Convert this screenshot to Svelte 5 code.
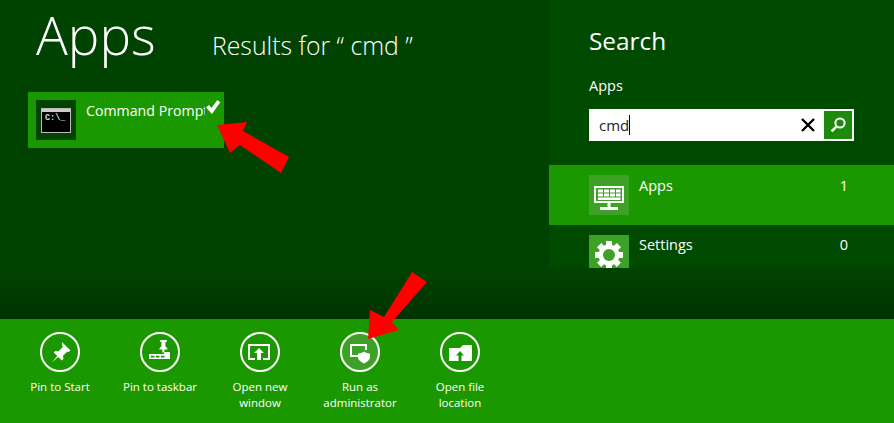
<script>
	const commands = [
		{ id: 'pin', label: ['Pin to Start'] },
		{ id: 'taskbar', label: ['Pin to taskbar'] },
		{ id: 'window', label: ['Open new', 'window'] },
		{ id: 'admin', label: ['Run as', 'administrator'] },
		{ id: 'folder', label: ['Open file', 'location'] }
	];
</script>

<div class="screen">
	<div class="main">
		<section class="results">
			<header class="heading">
				<h1>Apps</h1>
				<h2>Results for “ cmd ”</h2>
			</header>
			<div class="tile">
				<div class="tile-icon">
					<div class="console">
						<span class="console-bar"></span>
						<span class="console-text">C:\_</span>
					</div>
				</div>
				<span class="tile-name">Command Prompt</span>
				<svg class="check" viewBox="0 0 16 16" width="16" height="16">
					<path d="M1 8.500l3-2.600 2.500 3L12.300 1l3 2.200L7 15z" fill="#fff" />
				</svg>
			</div>
		</section>

		<aside class="charm">
			<h3>Search</h3>
			<div class="scope">Apps</div>
			<div class="box">
				<span class="query">cmd</span>
				<span class="caret"></span>
				<svg class="clear" viewBox="0 0 16 16" width="16" height="16">
					<path d="M2 2l12 12M14 2L2 14" stroke="#000" stroke-width="2.400" fill="none" />
				</svg>
				<div class="go">
					<svg viewBox="0 0 20 20" width="20" height="20">
						<circle cx="12" cy="8" r="4.600" stroke="#fff" stroke-width="2" fill="none" />
						<path d="M8.600 11.400L3.600 16.400" stroke="#fff" stroke-width="2.600" />
					</svg>
				</div>
			</div>
			<div class="row selected">
				<div class="row-icon">
					<svg viewBox="0 0 40 40" width="40" height="40">
						<path fill-rule="evenodd" fill="#fff" d="M5 11h30v17h-30zM7 13v13h26v-13z" />
						<path fill="#fff" d="M9 14.500h5v3h-5zM15 14.500h5v3h-5zM21 14.500h5v3h-5zM27 14.500h4.500v3h-4.500zM9 18.500h5v3h-5zM15 18.500h5v3h-5zM21 18.500h5v3h-5zM27 18.500h4.500v3h-4.500zM9 22.500h22.500v2.500h-22.500zM18.500 28h3v4h-3zM11 32h18v3h-18z" />
					</svg>
				</div>
				<span class="row-name">Apps</span>
				<span class="row-count">1</span>
			</div>
			<div class="row cut">
				<div class="row-icon">
					<svg viewBox="0 0 40 40" width="40" height="40">
						<g fill="#fff">
							<rect x="17" y="6" width="6" height="28" />
							<rect x="17" y="6" width="6" height="28" transform="rotate(45 20 20)" />
							<rect x="17" y="6" width="6" height="28" transform="rotate(90 20 20)" />
							<rect x="17" y="6" width="6" height="28" transform="rotate(135 20 20)" />
						</g>
						<circle cx="20" cy="20" r="10.500" fill="#fff" />
						<circle cx="20" cy="20" r="6" fill="#3ea127" />
					</svg>
				</div>
				<span class="row-name">Settings</span>
				<span class="row-count">0</span>
			</div>
		</aside>
	</div>

	<footer class="appbar">
		{#each commands as c}
			<div class="command">
				<div class="ring" class:lit={c.id === 'admin'}>
					<svg viewBox="0 0 36 36" width="36" height="36">
						{#if c.id === 'pin'}
							<path fill="#fff" d="M20 8l8.500 8.500-2 1.500-1-.6-4.500 4.300.4 3.300-1.600 1.600-3.600-3.600-6.700 5.800 5.800-6.700-3.600-3.600 1.600-1.600 3.300.4 4.300-4.500-.6-1z" />
						{:else if c.id === 'taskbar'}
							<path fill="#fff" fill-rule="evenodd" d="M18 6h7v1.800h-1.600v4.500l2 2.200v1h-3v3h-2v-3h-3v-1l2-2.200v-4.500h-1.600zM7 20h15v-2h6v7h-21zM9 21.800v1.800h3.500v-1.800zM14 21.800v1.800h3.500v-1.800zM19 21.800v1.800h3.500v-1.800z" />
						{:else if c.id === 'window'}
							<path fill="#fff" d="M6 10h22v16h-7v-2h5v-12h-18v12h5v2h-7z" />
							<path fill="#fff" d="M17 14l5 5h-3v7h-4v-7h-3z" />
						{:else if c.id === 'admin'}
							<path fill="#fff" d="M8 10h17v6h-2v-4h-13v9h6v2h-8z" />
							<path fill="#fff" d="M22 17.500c2 1.500 4 2 6 2v3.500c0 3-3 5-6 6.500-3-1.500-6-3.500-6-6.500v-3.500c2 0 4-.5 6-2z" />
						{:else}
							<path fill="#fff" fill-rule="evenodd" d="M7 14h11l3-3h9v16h-23zM18 17l-4 4.500h2.500v5.500h3v-5.500h2.500z" />
						{/if}
					</svg>
				</div>
				<div class="label">
					{#each c.label as line}
						<span>{line}</span>
					{/each}
				</div>
			</div>
		{/each}
	</footer>

	<svg class="arrows" viewBox="0 0 894 423" width="894" height="423">
		<path fill="#f00" d="M217 125L247 122L243 131L289 157L281 173L240 145L230 153z" />
		<path fill="#f00" d="M368 339L370 310L384 317L412 272L427 282L392 322L399 330z" />
	</svg>
</div>

<style>
	:global(body) {
		margin: 0;
		background: #004400;
	}

	.screen {
		position: relative;
		display: flex;
		flex-direction: column;
		width: 894px;
		height: 423px;
		overflow: hidden;
		color: #fff;
		font-family: 'Open Sans', sans-serif;
	}

	.main {
		display: flex;
		height: 319px;
		background: linear-gradient(#004300 0, #004300 270px, #003300 319px);
	}

	.results {
		flex: 1;
		padding: 0 0 0 28px;
	}

	.heading {
		display: flex;
		align-items: baseline;
		height: 92px;
		padding-left: 8px;
		box-sizing: border-box;
	}

	h1 {
		margin: 0;
		width: 176px;
		font-size: 53px;
		font-weight: 300;
		line-height: 69px;
	}

	h2 {
		margin: 0;
		font-size: 24.800px;
		font-weight: 300;
		white-space: nowrap;
	}

	.tile {
		position: relative;
		display: flex;
		width: 196px;
		height: 56px;
		padding: 8px;
		gap: 10px;
		box-sizing: border-box;
		background: #1b9800;
	}

	.tile-icon {
		display: flex;
		align-items: center;
		justify-content: center;
		width: 40px;
		height: 40px;
		background: #004400;
	}

	.console {
		width: 30px;
		height: 25px;
		background: #000;
		border: 1px solid #bbb;
		box-sizing: border-box;
		overflow: hidden;
	}

	.console-bar {
		display: block;
		height: 3px;
		background: #ccc;
	}

	.console-text {
		display: block;
		padding: 2px 0 0 3px;
		font-family: 'Liberation Mono', monospace;
		font-size: 8.500px;
		font-weight: 700;
		line-height: 9px;
		color: #ddd;
	}

	.tile-name {
		width: 119px;
		overflow: hidden;
		white-space: nowrap;
		font-size: 14.200px;
		line-height: 20px;
		margin-top: 1px;
	}

	.check {
		position: absolute;
		left: 177px;
		top: 7px;
	}

	.charm {
		width: 345px;
		height: 268px;
		background: #004a00;
	}

	h3 {
		margin: 0;
		padding: 24px 0 0 40px;
		height: 40px;
		font-size: 24.400px;
		font-weight: 400;
		line-height: 34px;
	}

	.scope {
		padding: 12px 0 0 40px;
		font-size: 14.500px;
		line-height: 20px;
		height: 12px;
	}

	.box {
		position: relative;
		display: flex;
		align-items: center;
		margin: 21px 0 0 40px;
		width: 265px;
		height: 32px;
		background: #fff;
		color: #222;
	}

	.query {
		padding-left: 10px;
		font-size: 15px;
	}

	.caret {
		width: 1px;
		height: 20px;
		background: #000;
	}

	.clear {
		margin-left: auto;
		margin-right: 8px;
	}

	.go {
		display: flex;
		align-items: center;
		justify-content: center;
		width: 28px;
		height: 28px;
		margin-right: 2px;
		background: #1c8a0a;
	}

	.row {
		display: flex;
		height: 60px;
		padding: 10px 46px 0 40px;
		box-sizing: border-box;
	}

	.row.selected {
		margin-top: 24px;
		background: #1b9800;
	}

	.row.selected .row-name,
	.row.selected .row-count {
		margin-top: 1px;
	}

	.row.cut {
		height: 43px;
		overflow: hidden;
	}

	.row-icon {
		width: 40px;
		height: 40px;
		flex: none;
		background: #3ea127;
	}

	.row-name {
		margin-left: 10px;
		font-size: 14.500px;
		line-height: 20px;
	}

	.row-count {
		margin-left: auto;
		font-size: 14.500px;
		line-height: 20px;
	}

	.appbar {
		display: flex;
		flex: 1;
		padding: 13px 0 0 10px;
		background: #1b9800;
	}

	.command {
		display: flex;
		flex-direction: column;
		align-items: center;
		width: 100px;
	}

	.ring {
		display: flex;
		align-items: center;
		justify-content: center;
		width: 40px;
		height: 40px;
		box-sizing: border-box;
		border: 2.500px solid #fff;
		border-radius: 50%;
	}

	.ring.lit {
		background: #3ea127;
	}

	.label {
		display: flex;
		flex-direction: column;
		align-items: center;
		margin-top: 7px;
		font-size: 11.500px;
		line-height: 16px;
	}

	.arrows {
		position: absolute;
		left: 0;
		top: 0;
		pointer-events: none;
	}
</style>
